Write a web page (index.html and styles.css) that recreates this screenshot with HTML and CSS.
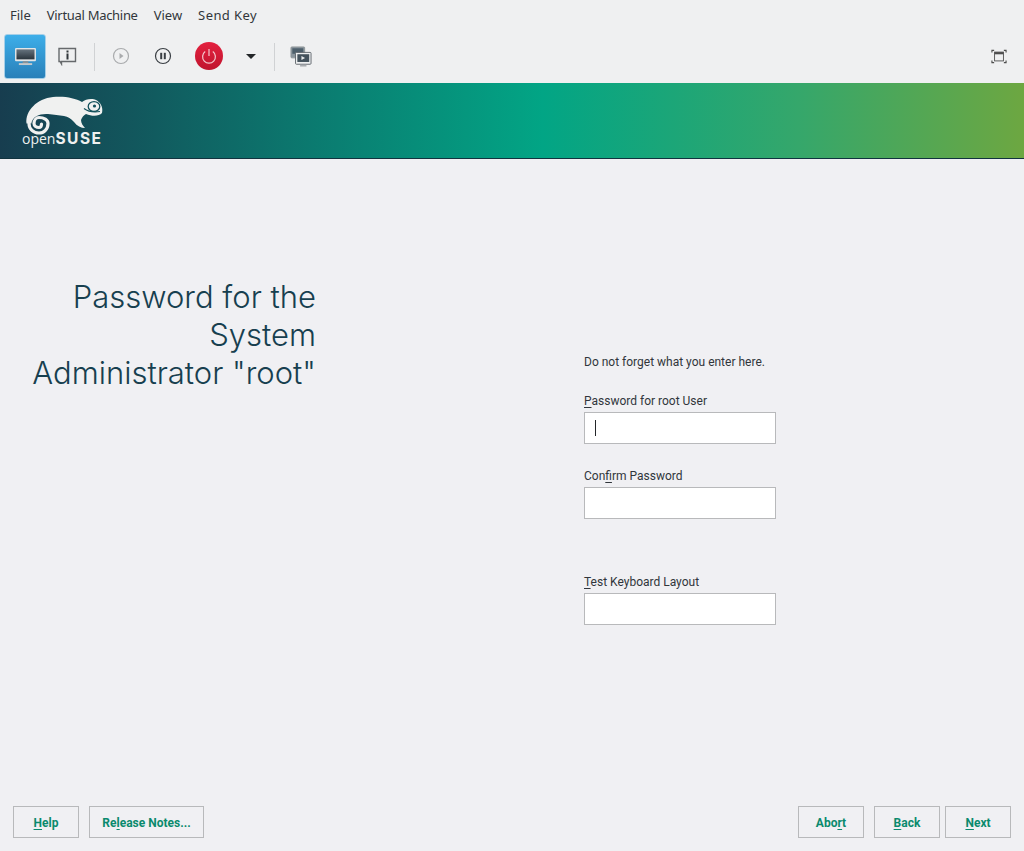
FILE: index.html

```html
<!DOCTYPE html>
<html lang="en">
<head>
<meta charset="UTF-8"/>
<title>openSUSE installer - Virtual Machine</title>
<link rel="stylesheet" href="styles.css">
</head>
<body>

<div class="menu-bar">
  <span>File</span>
  <span class="tight">Virtual Machine</span>
  <span>View</span>
  <span class="loose">Send Key</span>
</div>

<div class="tool-bar">
  <button class="tool active" title="Console">
    <svg width="23" height="19" viewBox="0 0 24 20">
      <defs>
        <linearGradient id="scr" x1="0" y1="0" x2="0" y2="1">
          <stop offset="0" stop-color="#66737e"/>
          <stop offset="1" stop-color="#2a343c"/>
        </linearGradient>
      </defs>
      <rect x="1" y="1" width="22" height="14" rx="1" fill="#e3e6e8"/>
      <rect x="2.500" y="2.500" width="19" height="10.500" fill="url(#scr)"/>
      <rect x="9" y="15" width="6" height="2" fill="#8b9195"/>
      <rect x="5" y="17" width="14" height="2" fill="#c6c9cb"/>
    </svg>
  </button>
  <button class="tool" title="Details">
    <svg width="20" height="20" viewBox="0 0 20 20">
      <path d="M2 2.500h16.500v13H4.500v2.500L3 15.500H2z" fill="none" stroke="#66696c" stroke-width="1.400"/>
      <rect x="9.500" y="4.500" width="2" height="2" fill="#31363b"/>
      <rect x="9.500" y="7.500" width="2" height="6" fill="#31363b"/>
    </svg>
  </button>
  <span class="sep"></span>
  <button class="tool" title="Run">
    <svg width="18" height="18" viewBox="0 0 18 18">
      <circle cx="9" cy="9" r="7.500" fill="none" stroke="#a9abad" stroke-width="1.200"/>
      <path d="M7.500 6l4 3-4 3z" fill="#a9abad"/>
    </svg>
  </button>
  <button class="tool" title="Pause">
    <svg width="18" height="18" viewBox="0 0 18 18">
      <circle cx="9" cy="9" r="7.500" fill="none" stroke="#3a3f44" stroke-width="1.200"/>
      <rect x="6.200" y="5.800" width="2" height="6.400" fill="#3a3f44"/>
      <rect x="9.800" y="5.800" width="2" height="6.400" fill="#3a3f44"/>
    </svg>
  </button>
  <button class="tool wide" title="Shut down">
    <span class="power">
      <svg width="18" height="18" viewBox="0 0 18 18">
        <path d="M5.200 4.600a6.400 6.400 0 1 0 7.600 0" fill="none" stroke="#f3c9cf" stroke-width="1.200"/>
        <path d="M9 2v7" stroke="#f3c9cf" stroke-width="1.200"/>
      </svg>
    </span>
  </button>
  <button class="tool narrow" title="Shut down options"><span class="caret"></span></button>
  <span class="sep"></span>
  <button class="tool" title="Snapshots">
    <svg width="22" height="21" viewBox="0 0 24 23">
      <rect x="1" y="1" width="15" height="12" rx="1" fill="#8a959d" stroke="#8e9498"/>
      <rect x="2.500" y="2.500" width="12" height="6" fill="#4d5f6b"/>
      <rect x="6" y="7" width="17" height="13" rx="1" fill="#eef0f1" stroke="#5d6469"/>
      <rect x="8" y="9" width="13" height="8.500" fill="#44525c"/>
      <path d="M12.500 11l4 2.200-4 2.200z" fill="#e9ebec"/>
      <rect x="11" y="20.500" width="7" height="2" fill="#a9adb0"/>
    </svg>
  </button>
  <button class="tool push" title="Fullscreen">
    <svg width="16" height="15" viewBox="0 0 18 17">
      <path d="M1 4V1.500h2.500M14.500 1.500H17V4M1 13v2.500h2.500M14.500 15.500H17V13" fill="none" stroke="#4d4d4d" stroke-width="1.300"/>
      <rect x="4" y="3.500" width="10" height="10" fill="none" stroke="#4d4d4d" stroke-width="1"/>
      <rect x="4" y="3.500" width="10" height="2.500" fill="#4d4d4d"/>
    </svg>
  </button>
</div>

<div class="banner">
  <div class="logo">
    <svg width="80" height="41" viewBox="0 0 80 41">
      <!-- chameleon, origin is 24,96 on the page -->
      <path d="M2.500 27.500C1 15 13 2.500 29 1C41 0 51 2 58 6C62 3 68 2 73 4.500C78 8 79 13 78 17C75 20.500 68 20.500 62 18C60 19 58 21 57 24C57 27 59 30 61 32C57 32 53 30 50 26C47 22.500 44 20.500 40 20C35 19.500 30 18.500 24 18C16 17.500 8.500 20 7.300 27.500Z" fill="#f0f1f0"/>
      <path d="M5 27.500C5 33 9.500 37 15 37C20 37 24 33 24 27.500C24 24 20 21.500 15 21.500C12 21.500 10 24.500 10 27.500C10 30 12.500 31.500 15 31.500C16.500 31.500 17.500 30 17.500 28" fill="none" stroke="#f0f1f0" stroke-width="3.200" stroke-linecap="round"/>
      <ellipse cx="70" cy="10.500" rx="5.800" ry="4.800" fill="none" stroke="#12505a" stroke-width="1.300"/>
      <circle cx="70.500" cy="10" r="1.600" fill="#12505a"/>
      <path d="M60 12.500C64 15.500 70 16.500 76 15.500" fill="none" stroke="#12505a" stroke-width="1.200"/>
    </svg>
    <div class="wordmark"><span class="open">open</span><span class="suse">SUSE</span></div>
  </div>
</div>

<div class="content">
  <h1 class="title">Password for the<br>System<br>Administrator "root"</h1>
  <form class="pw-form">
    <p class="hint">Do not forget what you enter here.</p>
    <label class="lbl"><u>P</u>assword for root User</label>
    <div class="field"><span class="cursor"></span></div>
    <label class="lbl">Con<u>f</u>irm Password</label>
    <div class="field"></div>
    <label class="lbl lbl-far"><u>T</u>est Keyboard Layout</label>
    <div class="field"></div>
  </form>
</div>

<div class="footer">
  <button class="btn"><u>H</u>elp</button>
  <button class="btn btn-notes">Re<u>l</u>ease Notes...</button>
  <button class="btn push">Abo<u>r</u>t</button>
  <button class="btn"><u>B</u>ack</button>
  <button class="btn btn-next"><u>N</u>ext</button>
</div>

</body>
</html>
```

FILE: styles.css

```css
html, body { height: 100%; }
body {
  margin: 0; background: #f0f0f3; color: #31363b;
  font-family: Roboto, sans-serif; font-size: 12px;
  display: flex; flex-direction: column;
  overflow: hidden;
}
button { font: inherit; background: none; border: none; padding: 0; cursor: pointer; }
u { text-underline-offset: 2px; }

.menu-bar {
  height: 30px; padding-left: 10px;
  display: flex; align-items: center; gap: 16px;
  background: #eff0f1;
  font-family: "Noto Sans", sans-serif; font-size: 13px;
}
.menu-bar .tight { letter-spacing: -.3px; }
.menu-bar .loose { letter-spacing: .4px; }

.tool-bar {
  height: 53px; padding: 0 4px;
  display: flex; align-items: center;
  background: #eff0f1;
}
.tool {
  width: 42px; height: 45px; margin-top: -1px;
  display: flex; align-items: center; justify-content: center;
  border-radius: 3px;
}
.tool.wide { width: 50px; }
.tool.narrow { width: 34px; }
.tool.active {
  background: linear-gradient(#3daee9, #2980b9);
  border: 1px solid #a5cfe8;
}
.sep { width: 1px; height: 28px; margin: 0 5px 0 6px; background: #d0d2d4; }
.push { margin-left: auto; }
.power {
  width: 28px; height: 28px; border-radius: 50%;
  display: flex; align-items: center; justify-content: center;
  background: linear-gradient(#e3213f, #c0142e);
}
.caret {
  width: 0; height: 0;
  border-left: 5px solid transparent; border-right: 5px solid transparent;
  border-top: 5px solid #232629;
}

.banner {
  height: 75px; padding-left: 22px;
  display: flex; align-items: flex-start;
  background: linear-gradient(90deg, #173d4f 0%, #0a7f72 33%, #02a585 53%, #35a76b 78%, #6da741 100%);
  border-bottom: 1px solid #11333f;
}
.logo { margin-top: 13px; width: 84px; }
.logo svg { display: block; margin-left: 2px; }
.wordmark {
  margin-top: -6px; line-height: 16px; color: #eef0ef;
  font-family: "Open Sans", sans-serif; white-space: nowrap;
}
.wordmark .open { font-size: 14px; font-weight: 400; }
.wordmark .suse {
  font-family: Inter, sans-serif; font-size: 15.500px; font-weight: 700; letter-spacing: 1.500px;
}

.content {
  flex: 1;
  display: grid; grid-template-columns: 316px 192px;
  column-gap: 268px; align-items: start;
}
.title {
  margin: 119px 0 0; text-align: right;
  font-family: Inter, sans-serif; font-size: 31px; font-weight: 300;
  line-height: 38px; color: #173f4f;
}
.pw-form { margin-top: 196px; }
.hint { margin: 0 0 25px; line-height: 14px; }
.lbl { display: block; line-height: 14px; margin: 25px 0 4px; }
.hint + .lbl { margin-top: 0; }
.lbl-far { margin-top: 56px; }
.field {
  height: 30px; padding-left: 10px;
  display: flex; align-items: center;
  background: #fff; border: 1px solid #b8b9bb;
}
.cursor { width: 1px; height: 16px; background: #232629; }

.footer {
  padding: 0 13px 13px;
  display: flex; gap: 10px;
}
.btn {
  width: 66px; height: 32px; padding-top: 2px;
  background: #f0f0f3; border: 1px solid #b8b9bb;
  color: #0a8a6d; font-weight: 700; font-size: 12px;
}
.btn-notes { width: 115px; }
.btn-next { margin-left: -5px; }
```
